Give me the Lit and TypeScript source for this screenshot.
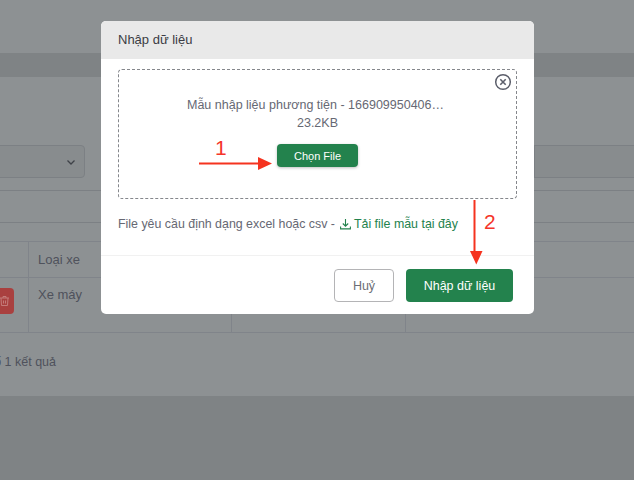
import { LitElement, html, css } from "lit";
import { customElement } from "lit/decorators.js";

@customElement("app-root")
export class AppRoot extends LitElement {
  static styles = css`
    :host {
      display: block;
      position: relative;
      width: 634px;
      height: 480px;
      overflow: hidden;
      background: #7f8385;
      font-family: "Liberation Sans", Arial, sans-serif;
      color: #4f525c;
    }

    /* dimmed page behind the modal */
    .topbar { height: 53px; background: #8d9193; }
    .band { height: 24px; background: #7f8385; }
    .card {
      height: 319px;
      background: #8d9193;
      padding-top: 68px;
      box-sizing: border-box;
      overflow: hidden;
    }
    .filters { display: flex; justify-content: space-between; height: 33px; }
    .select {
      box-sizing: border-box;
      height: 33px;
      border: 1px solid #7c8084;
      background: #888c8e;
      display: flex;
      align-items: center;
      justify-content: flex-end;
    }
    .select.left { width: 95px; margin-left: -10px; border-radius: 4px; padding-right: 7px; }
    .select.right { width: 110px; margin-right: -10px; border-right: 0; }
    .search {
      height: 31px;
      margin-top: 12px;
      border-top: 1px solid #7c8084;
      border-bottom: 1px solid #7c8084;
    }
    .table { margin-top: 18px; border-top: 1px solid #80848a; border-bottom: 1px solid #80848a; }
    .row { display: grid; grid-template-columns: 28px 203px 174px 1fr; }
    .row.head { height: 35px; border-bottom: 1px solid #80848a; }
    .row.body { height: 54px; }
    .cell { font-size: 13px; padding-left: 9px; border-left: 1px solid #80848a; }
    .cell:first-child { border-left: 0; padding-left: 0; }
    .head .cell { line-height: 36px; }
    .body .cell.type { padding-top: 9px; line-height: 16px; }
    .trash {
      box-sizing: border-box;
      width: 24px;
      height: 26px;
      margin: 10px 0 0 -10px;
      background: #a9403f;
      border-radius: 4px;
      display: flex;
      align-items: center;
      justify-content: flex-end;
      padding-right: 4px;
    }
    .summary {
      width: 56px;
      margin-top: 21px;
      font-size: 12.5px;
      line-height: 16px;
      white-space: nowrap;
      display: flex;
      justify-content: flex-end;
    }

    /* modal */
    .modal {
      position: absolute;
      left: 101px;
      top: 21px;
      width: 433px;
      height: 293px;
      background: #fff;
      border-radius: 5px;
      overflow: hidden;
      display: flex;
      flex-direction: column;
    }
    .modal-head {
      height: 38px;
      flex: none;
      box-sizing: border-box;
      padding-left: 17px;
      background: #e9e9e9;
      color: #3b3c44;
      font-size: 13px;
      line-height: 37px;
    }
    .modal-body { flex: 1; padding: 10px 17px 0 17px; }
    .dropzone {
      position: relative;
      box-sizing: border-box;
      height: 130px;
      border: 1px dashed #85878c;
      border-radius: 4px;
      display: flex;
      flex-direction: column;
      align-items: center;
      padding-top: 26px;
      color: #666873;
      font-size: 12.5px;
      line-height: 18px;
    }
    .name { margin-right: 4px; }
    .pick {
      margin-top: 12px;
      width: 81px;
      height: 23px;
      border: 0;
      border-radius: 4px;
      background: #23824d;
      color: #fff;
      font: 11px "Liberation Sans", Arial, sans-serif;
      padding: 0;
      box-shadow: 0 1px 3px rgba(0, 0, 0, 0.25);
    }
    .close { position: absolute; top: 3px; right: 4px; display: block; }
    .hint {
      display: flex;
      align-items: center;
      margin-top: 16px;
      height: 18px;
      color: #666873;
      font-size: 12.4px;
      white-space: pre;
    }
    .link { display: inline-flex; align-items: center; gap: 3px; color: #23824d; margin-left: 5px; }
    .modal-foot {
      flex: none;
      height: 59px;
      box-sizing: border-box;
      border-top: 1px solid #f1f1f1;
      padding: 13px 21px 0 0;
      display: flex;
      justify-content: flex-end;
      gap: 12px;
    }
    .btn {
      box-sizing: border-box;
      height: 33px;
      border-radius: 4px;
      font: 12.5px "Liberation Sans", Arial, sans-serif;
      padding: 0;
    }
    .btn.cancel { width: 60px; background: #fff; border: 1.5px solid #b4b4b6; color: #6c6e76; }
    .btn.ok { width: 107px; background: #23824d; border: 0; color: #fff; }

    /* red annotations on top of the screenshot */
    .marks { position: absolute; left: 0; top: 0; display: block; }
    .num { position: absolute; color: #f5352a; font-size: 21px; line-height: 24px; }
    .num.one { left: 215px; top: 136px; }
    .num.two { left: 484px; top: 210px; }
  `;

  render() {
    return html`
      <div class="topbar"></div>
      <div class="band"></div>
      <div class="card">
        <div class="filters">
          <div class="select left">
            <svg width="12" height="12" viewBox="0 0 12 12" fill="none" stroke="#3f4248" stroke-width="1.3">
              <path d="M2.5 4.5 6 8l3.5-3.5" />
            </svg>
          </div>
          <div class="select right"></div>
        </div>
        <div class="search"></div>
        <div class="table">
          <div class="row head">
            <div class="cell"></div>
            <div class="cell">Loại xe</div>
            <div class="cell"></div>
            <div class="cell"></div>
          </div>
          <div class="row body">
            <div class="cell">
              <div class="trash">
                <svg width="11" height="12" viewBox="0 0 11 12" fill="none" stroke="#c47c7a" stroke-width="1">
                  <path d="M1 3h9M4 3V1.5h3V3M2 3l.5 7.5h6L9 3M4.5 5.5v3M6.5 5.5v3" />
                </svg>
              </div>
            </div>
            <div class="cell type">Xe máy</div>
            <div class="cell"></div>
            <div class="cell"></div>
          </div>
        </div>
        <div class="summary">tổng số 1 kết quả</div>
      </div>

      <div class="modal">
        <div class="modal-head">Nhập dữ liệu</div>
        <div class="modal-body">
          <div class="dropzone">
            <svg class="close" width="18" height="18" viewBox="0 0 18 18" fill="none" stroke="#5c5f6b">
              <circle cx="9" cy="9" r="7.3" stroke-width="1.5" />
              <path d="M6.3 6.3l5.4 5.4M11.700 6.3l-5.400 5.400" stroke-width="1.6" />
            </svg>
            <div class="name">Mẫu nhập liệu phương tiện - 166909950406…</div>
            <div>23.2KB</div>
            <button class="pick">Chọn File</button>
          </div>
          <div class="hint">File yêu cầu định dạng excel hoặc csv -<span class="link"
              ><svg width="11" height="12" viewBox="0 0 11 12" fill="none" stroke="#23824d" stroke-width="1.100">
                <path d="M5.500 1v7M2.800 5.500l2.700 2.700 2.700-2.700M.6 8.500v2.400h9.800V8.500" /></svg
              >Tải file mẫu tại đây</span
            ></div>
        </div>
        <div class="modal-foot">
          <button class="btn cancel">Huỷ</button>
          <button class="btn ok">Nhập dữ liệu</button>
        </div>
      </div>

      <svg class="marks" width="634" height="480" viewBox="0 0 634 480">
        <path d="M199 163.500h60" stroke="#f5331f" stroke-width="2" fill="none" />
        <path d="M258 157l14 6.500-14 6.500z" fill="#f5331f" />
        <path d="M474.500 200v52" stroke="#f5331f" stroke-width="2" fill="none" />
        <path d="M470 251h12.500l-6.200 13.500z" fill="#f5331f" />
      </svg>
      <div class="num one">1</div>
      <div class="num two">2</div>
    `;
  }
}
